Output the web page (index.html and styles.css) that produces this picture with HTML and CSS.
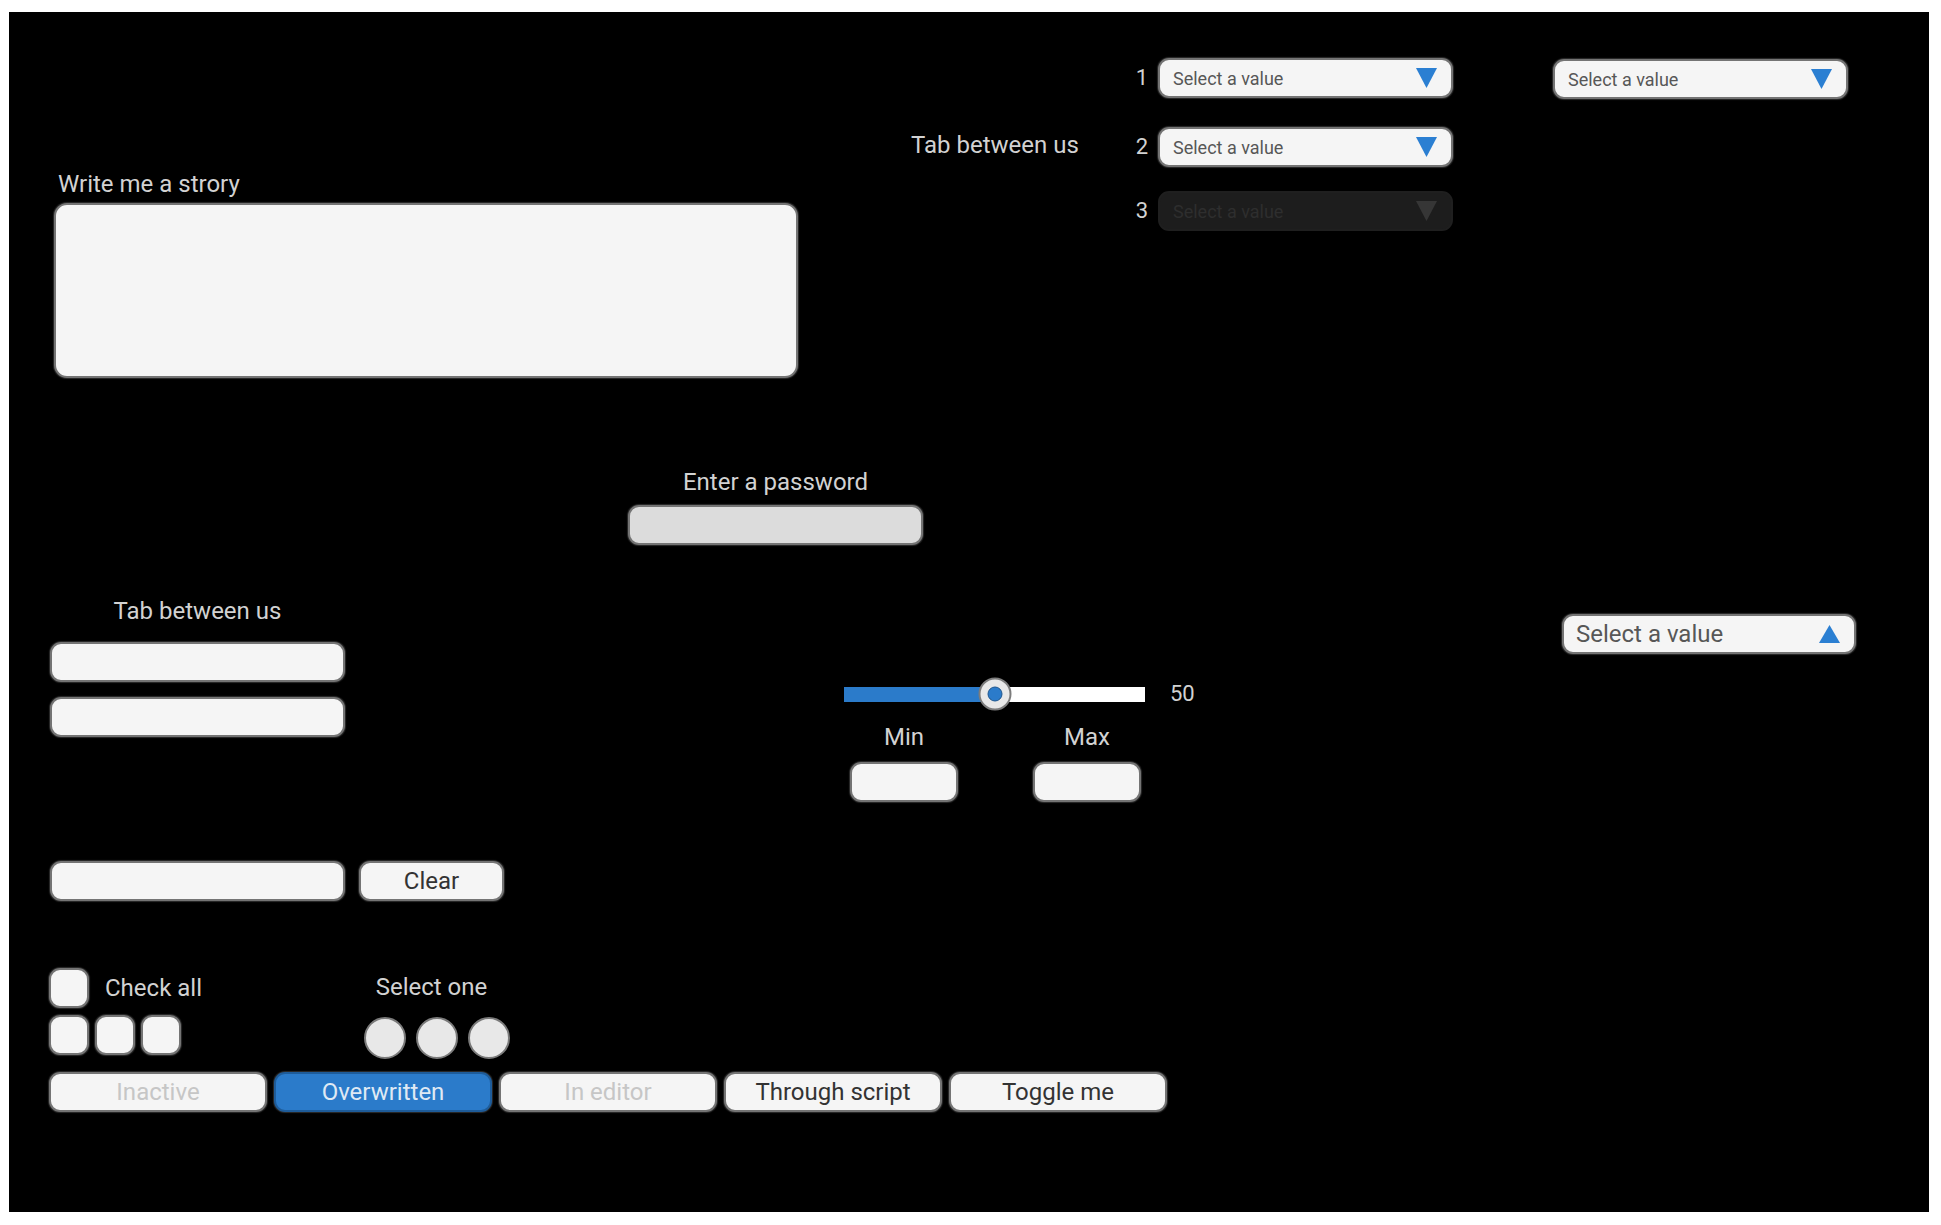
FILE: index.html
```html
<!DOCTYPE html>
<html>
<head>
<meta charset="utf-8">
<link rel="stylesheet" href="styles.css">
</head>
<body>
<div class="screen">
  <div class="row-top">
    <div class="story">
      <div class="label story-label">Write me a strory</div>
      <div class="field textarea"></div>
    </div>
    <div class="tabs">
      <div class="label tabs-label">Tab between us</div>
      <div class="numlist">
        <div class="numrow">
          <span class="num">1</span>
          <div class="field dropdown small"><span>Select a value</span><svg class="tri" width="21" height="20" viewBox="0 0 21 20"><polygon points="0,0 21,0 10.5,20"/></svg></div>
        </div>
        <div class="numrow r2">
          <span class="num">2</span>
          <div class="field dropdown small"><span>Select a value</span><svg class="tri" width="21" height="20" viewBox="0 0 21 20"><polygon points="0,0 21,0 10.5,20"/></svg></div>
        </div>
        <div class="numrow r3">
          <span class="num">3</span>
          <div class="field dropdown small disabled"><span>Select a value</span><svg class="tri" width="21" height="20" viewBox="0 0 21 20"><polygon points="0,0 21,0 10.5,20"/></svg></div>
        </div>
      </div>
    </div>
    <div class="field dropdown small tr"><span>Select a value</span><svg class="tri" width="21" height="20" viewBox="0 0 21 20"><polygon points="0,0 21,0 10.5,20"/></svg></div>
  </div>

  <div class="pw">
    <div class="label">Enter a password</div>
    <div class="field password"></div>
  </div>

  <div class="row-mid">
    <div class="tabs2">
      <div class="label">Tab between us</div>
      <div class="field input first"></div>
      <div class="field input second"></div>
    </div>
    <div class="slidergroup">
      <div class="sliderrow">
        <div class="track">
          <div class="fill" style="width:50%"></div>
          <div class="thumb" style="left:50%"><div class="dot"></div></div>
        </div>
        <div class="label value">50</div>
      </div>
      <div class="minmax">
        <div class="mm">
          <div class="label">Min</div>
          <div class="field mmfield"></div>
        </div>
        <div class="mm">
          <div class="label">Max</div>
          <div class="field mmfield"></div>
        </div>
      </div>
    </div>
    <div class="field dropdown big"><span>Select a value</span><svg class="tri" width="21" height="18" viewBox="0 0 21 18"><polygon points="10.5,0 21,18 0,18"/></svg></div>
  </div>

  <div class="row-clear">
    <div class="field input"></div>
    <div class="field btn clear">Clear</div>
  </div>

  <div class="row-checks">
    <div class="checkgroup">
      <div class="checkrow">
        <div class="field box"></div>
        <div class="label">Check all</div>
      </div>
      <div class="boxes">
        <div class="field box"></div>
        <div class="field box"></div>
        <div class="field box"></div>
      </div>
    </div>
    <div class="selectgroup">
      <div class="label select-label">Select one</div>
      <div class="radios">
        <div class="radio"></div>
        <div class="radio"></div>
        <div class="radio"></div>
      </div>
    </div>
  </div>

  <div class="buttons">
    <div class="field btn faded">Inactive</div>
    <div class="field btn active">Overwritten</div>
    <div class="field btn faded">In editor</div>
    <div class="field btn">Through script</div>
    <div class="field btn">Toggle me</div>
  </div>
</div>
</body>
</html>
```

FILE: styles.css
```css
* { box-sizing: border-box; }

body {
  margin: 0;
  background: #ffffff;
  font-family: Roboto, "Liberation Sans", sans-serif;
}

.screen {
  margin: 12px 0 0 9px;
  width: 1920px;
  height: 1200px;
  background: #000000;
  overflow: hidden;
}

.label {
  font-size: 24px;
  line-height: 28px;
  color: #d2d2d2;
  white-space: nowrap;
}

.field {
  background: #f5f5f5;
  border: 2px solid #747474;
  border-radius: 11px;
  box-shadow: 0 0 1px 1px #2c2c2c;
}

/* top row */
.row-top {
  display: flex;
  align-items: flex-start;
  height: 366px;
}

.story {
  margin-left: 45px;
  margin-top: 158px;
}

.story-label { padding-left: 4px; }

.textarea {
  width: 744px;
  height: 175px;
  margin-top: 5px;
  border-radius: 13px;
}

.tabs {
  display: flex;
  align-items: flex-start;
  margin-left: 113px;
}

.tabs-label {
  width: 217px;
  margin-top: 119px;
}

.numlist { margin-top: 46px; }

.numrow {
  display: flex;
  align-items: center;
}

.numrow.r2 { margin-top: 29px; }
.numrow.r3 { margin-top: 24px; }

.num {
  width: 20px;
  margin-right: 10px;
  text-align: right;
  font-size: 22px;
  line-height: 26px;
  color: #d2d2d2;
}

.dropdown {
  width: 295px;
  height: 40px;
  display: flex;
  align-items: center;
  justify-content: space-between;
  padding: 0 14px 0 13px;
  color: #575757;
}

.dropdown.small { font-size: 18px; }
.dropdown.big { font-size: 24px; padding-left: 12px; }

.tri { fill: #2b7fd2; flex: none; }

.dropdown.disabled {
  background: #1d1d1d;
  border-color: #1f1f1f;
  box-shadow: none;
  color: #2e2e2e;
}

.dropdown.disabled .tri { fill: #363636; }

.tr {
  margin-left: 100px;
  margin-top: 47px;
}

/* password */
.pw {
  display: flex;
  flex-direction: column;
  align-items: center;
  width: 295px;
  margin-left: 619px;
  margin-top: 90px;
}

.password {
  width: 295px;
  height: 40px;
  margin-top: 9px;
  background: #dcdcdc;
}

/* middle row */
.row-mid {
  display: flex;
  align-items: flex-start;
}

.tabs2 {
  display: flex;
  flex-direction: column;
  align-items: center;
  width: 295px;
  margin-left: 41px;
  margin-top: 52px;
}

.input {
  width: 295px;
  height: 40px;
}

.tabs2 .first { margin-top: 17px; }
.tabs2 .second { margin-top: 15px; }

.slidergroup {
  margin-left: 499px;
  margin-top: 133px;
}

.sliderrow {
  display: flex;
  align-items: center;
  height: 32px;
}

.track {
  position: relative;
  width: 301px;
  height: 15px;
  background: #ffffff;
}

.fill {
  height: 100%;
  background: #2b7bca;
}

.thumb {
  position: absolute;
  top: 50%;
  width: 33px;
  height: 33px;
  transform: translate(-50%, -50%);
  border-radius: 50%;
  background: #e8e8e8;
  border: 2px solid #7c7c7c;
  display: flex;
  align-items: center;
  justify-content: center;
}

.dot {
  width: 15px;
  height: 15px;
  border-radius: 50%;
  background: #2b7bca;
  border: 1px solid #1d568e;
}

.value {
  width: 40px;
  margin-left: 25px;
  font-size: 22px;
}

.minmax {
  display: flex;
  gap: 75px;
  margin-top: 13px;
  margin-left: 6px;
}

.mm {
  display: flex;
  flex-direction: column;
  align-items: center;
  width: 108px;
}

.mmfield {
  width: 108px;
  height: 40px;
  margin-top: 11px;
}

.dropdown.big {
  width: 294px;
  margin-left: 352px;
  margin-top: 69px;
}

/* clear row */
.row-clear {
  display: flex;
  gap: 14px;
  margin-left: 41px;
  margin-top: 59px;
}

.btn {
  height: 40px;
  display: flex;
  align-items: center;
  justify-content: center;
  font-size: 24px;
  color: #333333;
  white-space: nowrap;
}

.clear { width: 145px; }

/* checks */
.row-checks {
  display: flex;
  align-items: flex-start;
  margin-top: 67px;
}

.checkgroup {
  width: 200px;
  margin-left: 40px;
}

.checkrow {
  display: flex;
  align-items: center;
}

.checkrow .label { margin-left: 16px; }

.box {
  width: 40px;
  height: 40px;
  border-radius: 11px;
}

.boxes {
  display: flex;
  gap: 6px;
  margin-top: 7px;
}

.selectgroup {
  display: flex;
  flex-direction: column;
  align-items: center;
  width: 147px;
  margin-left: 114px;
}

.select-label {
  margin-top: 5px;
  padding-right: 10px;
}

.radios {
  display: flex;
  gap: 10px;
  margin-top: 16px;
}

.radio {
  width: 42px;
  height: 42px;
  border-radius: 50%;
  background: #e8e8e8;
  border: 2px solid #7a7a7a;
}

/* buttons */
.buttons {
  display: flex;
  gap: 7px;
  margin-left: 40px;
  margin-top: 13px;
}

.buttons .btn { width: 218px; }

.btn.faded { color: #c6c6c6; }

.btn.active {
  background: #2b7bca;
  border-color: #1e5c9a;
  color: #dfe9f4;
}
```
